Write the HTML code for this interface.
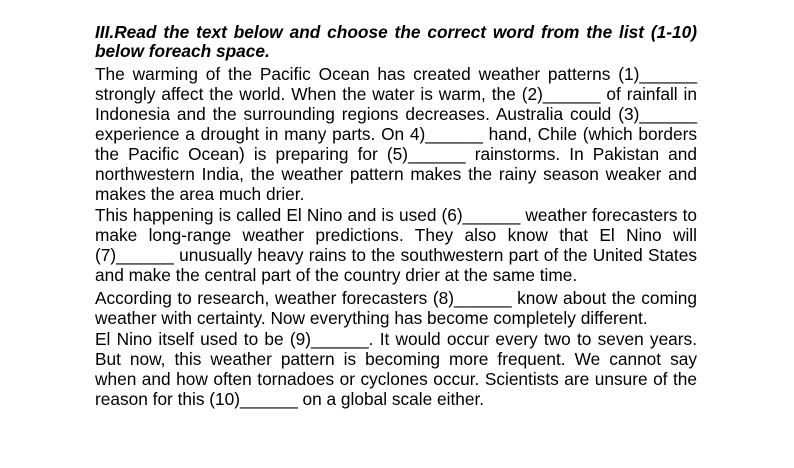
<!DOCTYPE html>
<html><head><meta charset="utf-8"><style>
body{margin:0;width:794px;height:468px;background:#fff;position:relative;overflow:hidden;font-family:"Liberation Sans",Arial,sans-serif;color:#000}
.l{position:absolute;left:95px;width:602px;height:20px;line-height:20px;font-size:17.3px;white-space:nowrap;text-align:justify;text-align-last:justify}
.n{text-align-last:left}
.h{font-weight:bold;font-style:italic}
</style></head><body>
<div class="l h" style="top:22px">III.Read the text below and choose the correct word from the list (1-10)</div>
<div class="l h n" style="top:41px">below foreach space.</div>
<div class="l" style="top:64px">The warming of the Pacific Ocean has created weather patterns (1)______</div>
<div class="l" style="top:84px">strongly affect the world. When the water is warm, the (2)______ of rainfall in</div>
<div class="l" style="top:104px">Indonesia and the surrounding regions decreases. Australia could (3)______</div>
<div class="l" style="top:124px">experience a drought in many parts. On 4)______ hand, Chile (which borders</div>
<div class="l" style="top:144px">the Pacific Ocean) is preparing for (5)______ rainstorms. In Pakistan and</div>
<div class="l" style="top:164px">northwestern India, the weather pattern makes the rainy season weaker and</div>
<div class="l n" style="top:184px">makes the area much drier.</div>
<div class="l" style="top:205px">This happening is called El Nino and is used (6)______ weather forecasters to</div>
<div class="l" style="top:225px">make long-range weather predictions. They also know that El Nino will</div>
<div class="l" style="top:245px">(7)______ unusually heavy rains to the southwestern part of the United States</div>
<div class="l n" style="top:265px">and make the central part of the country drier at the same time.</div>
<div class="l" style="top:288px">According to research, weather forecasters (8)______ know about the coming</div>
<div class="l n" style="top:308px">weather with certainty. Now everything has become completely different.</div>
<div class="l" style="top:329px">El Nino itself used to be (9)______. It would occur every two to seven years.</div>
<div class="l" style="top:349px">But now, this weather pattern is becoming more frequent. We cannot say</div>
<div class="l" style="top:369px">when and how often tornadoes or cyclones occur. Scientists are unsure of the</div>
<div class="l n" style="top:389px">reason for this (10)______ on a global scale either.</div>
</body></html>
